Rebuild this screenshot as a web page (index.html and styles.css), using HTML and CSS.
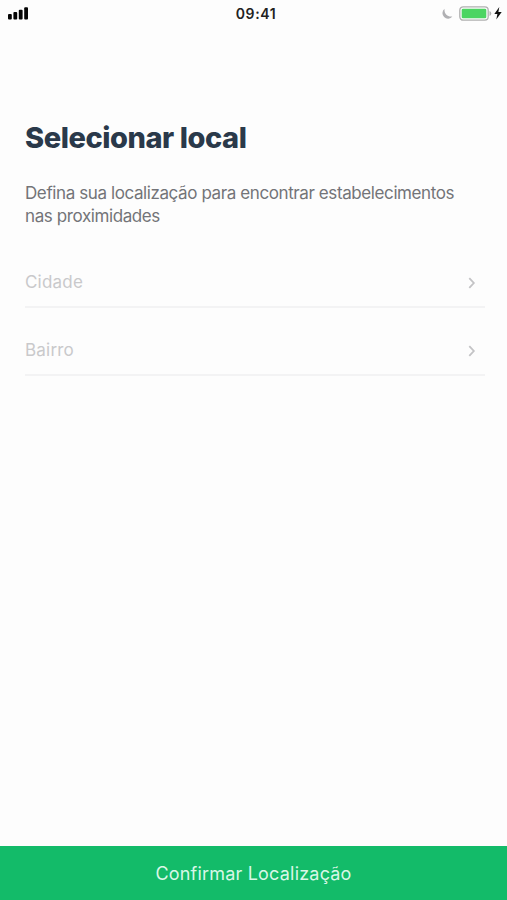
FILE: index.html
```html
<!DOCTYPE html>
<html lang="pt-BR">
<head>
    <meta charset="UTF-8">
    <meta name="viewport" content="width=device-width, initial-scale=1.0">
    <title>Selecionar local</title>
    <link rel="stylesheet" href="styles.css">
</head>
<body>
    <header class="status-bar">
        <svg class="signal" width="22" height="14" viewBox="0 0 22 14">
            <rect x="0" y="7" width="3.8" height="5.5" rx="1"/>
            <rect x="5.4" y="5" width="3.8" height="7.5" rx="1"/>
            <rect x="10.8" y="2.7" width="3.8" height="9.8" rx="1"/>
            <rect x="16.2" y="0.3" width="3.8" height="12.2" rx="1"/>
        </svg>
        <span class="time">09:41</span>
        <div class="status-icons">
            <svg class="moon" width="12" height="12" viewBox="0 0 12 12">
                <path d="M3.6 0.8A5.5 5.5 0 1 0 11.4 8.4C7 9.4 2.8 5.8 3.6 0.8Z"/>
            </svg>
            <svg class="battery" width="33" height="15" viewBox="0 0 33 15">
                <rect class="battery-case" x="0.8" y="0.8" width="28.4" height="13.4" rx="3.4"/>
                <rect class="battery-level" x="2.7" y="2.7" width="24.6" height="9.6" rx="1.4"/>
                <path class="battery-tip" d="M30.5 5q1.8.8 1.8 2.5t-1.8 2.5z"/>
            </svg>
            <svg class="bolt" width="8" height="13" viewBox="0 0 8 13">
                <path d="M5.3 0L0.3 7.1H3.4L2.3 12.6 7.7 5.1H4.4Z"/>
            </svg>
        </div>
    </header>

    <main class="content">
        <h1>Selecionar local</h1>
        <p class="description">Defina sua localização para encontrar estabelecimentos<br>nas proximidades</p>

        <div class="field">
            <span>Cidade</span>
            <svg width="8" height="12" viewBox="0 0 8 12"><path d="M1.3 1.2L5.8 6 1.3 10.8"/></svg>
        </div>
        <div class="field">
            <span>Bairro</span>
            <svg width="8" height="12" viewBox="0 0 8 12"><path d="M1.3 1.2L5.8 6 1.3 10.8"/></svg>
        </div>
    </main>

    <button class="confirm">Confirmar Localização</button>
</body>
</html>
```
FILE: styles.css
```css
* { box-sizing: border-box; }
body { margin: 0; height: 100vh; display: flex; flex-direction: column; overflow: hidden; background: #fdfdfd; font-family: Inter, "Liberation Sans", sans-serif; }
.status-bar { display: grid; grid-template-columns: 1fr auto 1fr; align-items: center; height: 27px; padding: 0 5px 0 8px; color: #222; }
.signal { fill: #050505; }
.time { padding-left: 2px; font-size: 14px; font-weight: 600; letter-spacing: 0.6px; }
.status-icons { display: flex; align-items: center; justify-content: flex-end; }
.moon { fill: #b0b0b3; margin-right: 6px; }
.battery { margin-right: 2px; }
.battery-case { fill: #fdfdfd; stroke: #b0b0b0; stroke-width: 1.3; }
.battery-level { fill: #4cd562; }
.battery-tip { fill: #b0b0b0; }
.bolt { fill: #111; }
.content { flex: 1; padding: 91px 22px 0 25px; }
h1 { margin: 0; font-size: 29px; line-height: 40px; font-weight: 800; letter-spacing: -0.45px; color: #2a394a; white-space: nowrap; }
.description { margin: 24px 0 31px; font-size: 17px; line-height: 23px; letter-spacing: -0.4px; color: #737478; white-space: nowrap; }
.field { display: flex; align-items: center; justify-content: space-between; height: 49px; margin-bottom: 19px; padding: 0 9px 1px 0; border-bottom: 2px solid #f3f3f4; font-size: 17px; letter-spacing: 0.2px; color: #c9c9cb; }
.field svg { fill: none; stroke: #c3c3c5; stroke-width: 1.8; margin-top: 2px; }
.confirm { height: 54px; padding: 0; border: 0; background: #13bb69; color: #d9f7e7; font-family: inherit; font-size: 18px; letter-spacing: 0.2px; }
```
